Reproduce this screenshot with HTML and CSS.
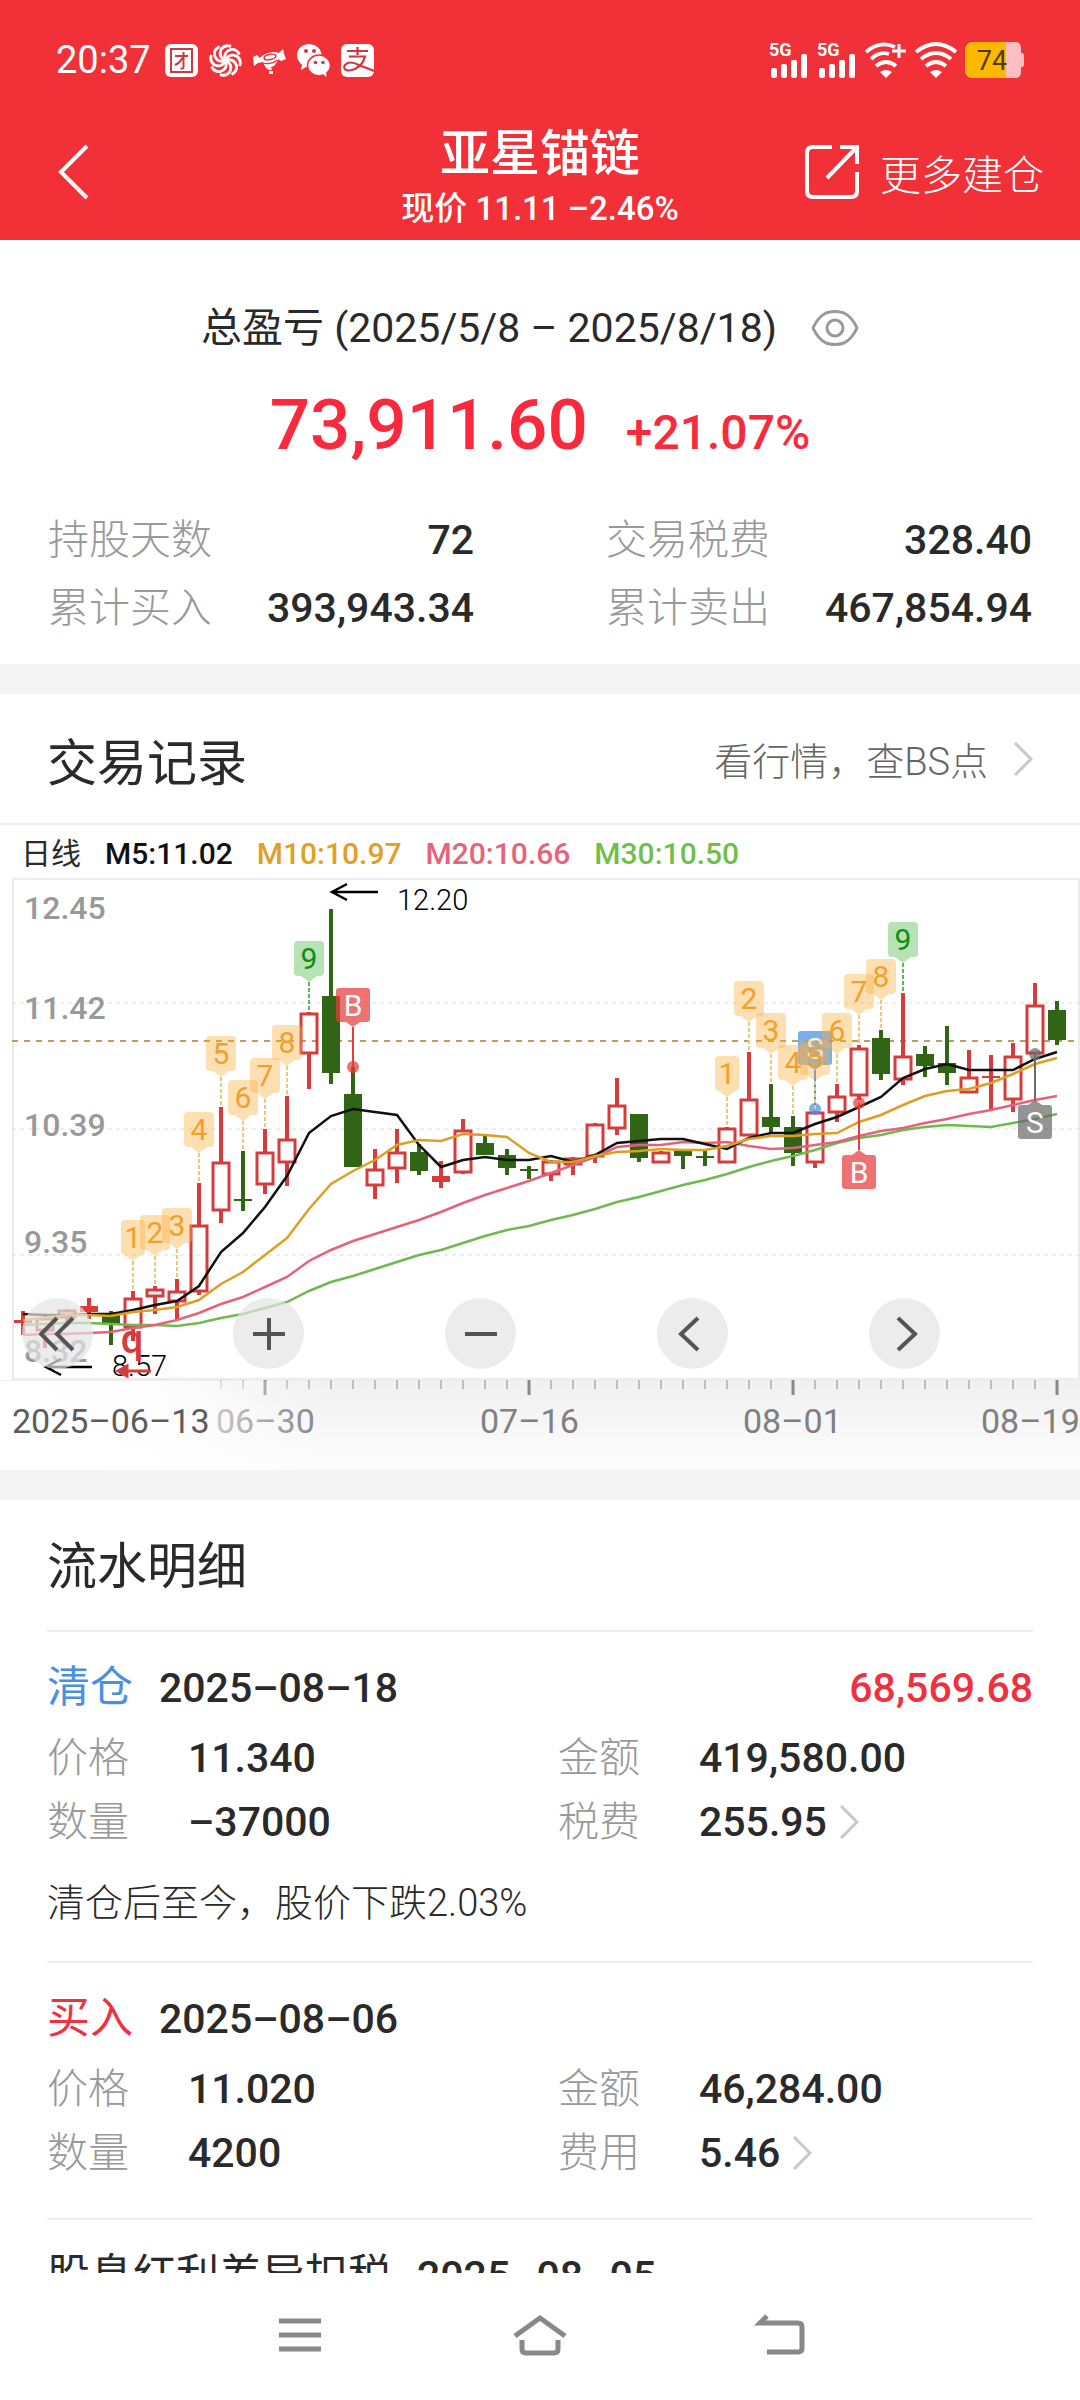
FILE: index.html
```html
<!DOCTYPE html>
<html lang="zh-CN">
<head>
    <meta charset="UTF-8">
    <meta name="viewport" content="width=device-width, initial-scale=1.0">
    <title>亚星锚链 - 总盈亏</title>
    <link rel="stylesheet" href="styles.css">
</head>
<body>
    <header class="header">
        <div class="status-bar">
            <span class="clock">20:37</span>
            <svg class="app-icon" viewBox="0 0 33 33"><rect width="33" height="33" rx="6" fill="#fff"/><rect x="6" y="5" width="21" height="23" fill="none" stroke="#c93a42" stroke-width="2"/><path d="M10 12h13M18.500 8v15q0 2-3 1.500M18 13q-3 6-8 8" fill="none" stroke="#c93a42" stroke-width="2"/></svg>
            <svg class="app-icon" viewBox="0 0 33 33" fill="none" stroke="#fff" stroke-width="2.800"><path id="arm" d="M16.500 16.500q-3-8 5-11 6-1 9 5"/><use href="#arm" transform="rotate(45 16.500 16.500)"/><use href="#arm" transform="rotate(90 16.500 16.500)"/><use href="#arm" transform="rotate(135 16.500 16.500)"/><use href="#arm" transform="rotate(180 16.500 16.500)"/><use href="#arm" transform="rotate(225 16.500 16.500)"/><use href="#arm" transform="rotate(270 16.500 16.500)"/><use href="#arm" transform="rotate(315 16.500 16.500)"/></svg>
            <svg class="app-icon" viewBox="0 0 33 33" fill="#fff"><path d="M0 13l4-2 3 3q4-5 13-6 4 0 6 1l4-4 1 5 2 5-5 2-3-2q-2 7-7 8l1 3h-3q-4-2-6-8l-5 1-4 3z"/><ellipse cx="17" cy="13" rx="6" ry="2.500" fill="none" stroke="#f13038" stroke-width="1.500" transform="rotate(-12 17 13)"/><path d="M9 19q10 2 15-3" fill="none" stroke="#f13038" stroke-width="1.200"/><rect x="16" y="27" width="4" height="3"/></svg>
            <svg class="app-icon" viewBox="0 0 33 33"><path d="M12.500 0C5 0 0 5 0 11q0 6 5 9.500L4 26l5-3q11 2 15-6 3-15-11.500-17z" fill="#fff"/><ellipse cx="22" cy="21.500" rx="11.500" ry="10.500" fill="#fff" stroke="#f13038" stroke-width="1.500"/><path d="M26 30l3.500 3-.5-5z" fill="#fff"/><g fill="#c93a42"><circle cx="9" cy="7" r="2"/><circle cx="17" cy="7" r="2"/><circle cx="18.500" cy="18.500" r="1.800"/><circle cx="26" cy="18.500" r="1.800"/></g></svg>
            <svg class="app-icon" viewBox="0 0 33 33"><rect width="33" height="33" rx="6" fill="#fff"/><path d="M16.500 3v8M6 7h21M8 12.500h16q-2 8-9 12-6 3-10 1.500-3-2-1-5 4-5 14 0l15 6" fill="none" stroke="#d4343c" stroke-width="2.200"/></svg>
            <div class="status-right">
                <svg class="signal" viewBox="0 0 40 36" fill="#fff"><text class="net" x="0" y="14">5G</text><rect x="2" y="26" width="6" height="10" rx="2"/><rect x="12" y="22" width="6" height="14" rx="2"/><rect x="22" y="18" width="6" height="18" rx="2"/><rect x="32" y="12" width="6" height="24" rx="2"/></svg>
                <svg class="signal" viewBox="0 0 40 36" fill="#fff"><text class="net" x="0" y="14">5G</text><rect x="2" y="26" width="6" height="10" rx="2"/><rect x="12" y="22" width="6" height="14" rx="2"/><rect x="22" y="18" width="6" height="18" rx="2"/><rect x="32" y="12" width="6" height="24" rx="2"/></svg>
                <svg class="wifi" viewBox="0 0 42 36" fill="none" stroke="#fff" stroke-width="3.800"><path d="M1 10Q15-2 30 5M6 17q9-8 18-5M11 24q10-8 20 0"/><path d="M34 2v14M27 9h14" stroke-width="3"/><path d="M15 30q6-4 12 0l-6 6z" fill="#fff" stroke="none"/></svg>
                <svg class="wifi" viewBox="0 0 42 36" fill="none" stroke="#fff" stroke-width="3.800"><path d="M1 10q20-16 40 0M6 17q15-12 30 0M11 24q10-8 20 0"/><path d="M15 30q6-4 12 0l-6 6z" fill="#fff" stroke="none"/></svg>
                <svg class="battery" viewBox="0 0 60 36"><path d="M9 0h41q6 0 6 6v5h1q2 0 2 3v8q0 3-2 3h-1v5q0 6-6 6H9q-9 0-9-9V9q0-9 9-9z" fill="#fcc0c3"/><path d="M9 0h32v36H9q-9 0-9-9V9q0-9 9-9z" fill="#ffb800"/><text class="level" x="27" y="28">74</text></svg>
            </div>
        </div>
        <div class="title-bar">
            <button class="icon-btn back" aria-label="返回"><svg width="31" height="56" viewBox="0 0 31 56" fill="none" stroke="#fff" stroke-width="4"><path d="M29 2L3 28l26 26"/></svg></button>
            <div class="title">
                <h1>亚星锚链</h1>
                <p>现价 11.11 –2.46%</p>
            </div>
            <a class="more" href="#"><svg width="56" height="56" viewBox="0 0 56 56" fill="none" stroke="#fff" stroke-width="4"><path d="M28 3H9q-6 0-6 6v38q0 6 6 6h38q6 0 6-6V28"/><path d="M36 3h17v17M53 3L23 34"/></svg>更多建仓</a>
        </div>
    </header>

    <main class="content">
        <section class="summary">
            <div class="period">
                <span>总盈亏 (2025/5/8 – 2025/8/18)</span>
                <button class="icon-btn" aria-label="隐藏金额"><svg width="48" height="36" viewBox="0 0 48 36" fill="none" stroke="#999" stroke-width="3"><path d="M2 18Q7 7 15 3q9-3 18 0 8 4 13 15-5 11-13 15-9 3-18 0Q7 29 2 18z"/><circle cx="24" cy="18" r="8"/></svg></button>
            </div>
            <div class="profit"><strong>73,911.60</strong><span>+21.07%</span></div>
            <dl class="stats">
                <div><dt>持股天数</dt><dd>72</dd></div>
                <div><dt>交易税费</dt><dd>328.40</dd></div>
                <div><dt>累计买入</dt><dd>393,943.34</dd></div>
                <div><dt>累计卖出</dt><dd>467,854.94</dd></div>
            </dl>
        </section>

        <section class="trades">
            <div class="section-head">
                <h2>交易记录</h2>
                <a class="quote-link" href="#">看行情，查BS点<svg class="chevron" viewBox="0 0 20 34"><path d="M2 1l16 16L2 33"/></svg></a>
            </div>
            <div class="legend">
                <span>日线</span>
                <span class="m5">M5:11.02</span>
                <span class="m10">M10:10.97</span>
                <span class="m20">M20:10.66</span>
                <span class="m30">M30:10.50</span>
            </div>
            <div class="chart">
                <svg id="kline" viewBox="0 0 1080 592"></svg>
                <div class="chart-tools">
                    <button aria-label="最早"><svg viewBox="0 0 36 36"><path d="M18 2L2 18l16 16M34 2L18 18l16 16"/></svg></button>
                    <button aria-label="放大"><svg viewBox="0 0 36 36"><path d="M18 2v32M2 18h32"/></svg></button>
                    <button aria-label="缩小"><svg viewBox="0 0 36 36"><path d="M2 18h32"/></svg></button>
                    <button aria-label="向前"><svg viewBox="0 0 36 36"><path d="M24 2L7 18l17 16"/></svg></button>
                    <button aria-label="向后"><svg viewBox="0 0 36 36"><path d="M12 2l17 16-17 16"/></svg></button>
                </div>
            </div>
        </section>

        <section class="details">
            <h2>流水明细</h2>
            <article class="entry">
                <div class="entry-head"><span class="type sell">清仓</span><time>2025–08–18</time><span class="amount">68,569.68</span></div>
                <dl class="fields">
                    <dt>价格</dt><dd>11.340</dd><dt>金额</dt><dd>419,580.00</dd>
                    <dt>数量</dt><dd>–37000</dd><dt>税费</dt><dd>255.95<svg class="chevron" viewBox="0 0 20 34"><path d="M2 1l16 16L2 33"/></svg></dd>
                </dl>
                <p class="note">清仓后至今，股价下跌2.03%</p>
            </article>
            <article class="entry">
                <div class="entry-head"><span class="type buy">买入</span><time>2025–08–06</time></div>
                <dl class="fields">
                    <dt>价格</dt><dd>11.020</dd><dt>金额</dt><dd>46,284.00</dd>
                    <dt>数量</dt><dd>4200</dd><dt>费用</dt><dd>5.46<svg class="chevron" viewBox="0 0 20 34"><path d="M2 1l16 16L2 33"/></svg></dd>
                </dl>
            </article>
            <article class="entry">
                <div class="entry-head"><span class="type">股息红利差异扣税</span><time>2025–08–05</time></div>
            </article>
        </section>
    </main>

    <nav class="system-nav">
        <button class="icon-btn" aria-label="最近任务"><svg width="56" height="44" viewBox="0 0 56 44"><path d="M7 8h42M7 22h42M7 36h42"/></svg></button>
        <button class="icon-btn" aria-label="主屏幕"><svg width="56" height="44" viewBox="0 0 56 44"><path d="M3 23L28 5l25 18M10 27v9q0 4 4 4h28q4 0 4-4v-9"/></svg></button>
        <button class="icon-btn" aria-label="返回上级"><svg width="56" height="44" viewBox="0 0 56 44"><path d="M15 3L8 10h38q4 0 4 4v21q0 4-4 4H15"/></svg></button>
    </nav>
    <script src="chart.js"></script>
</body>
</html>
```
FILE: styles.css
```css
* {
    margin: 0;
    padding: 0;
    box-sizing: border-box;
}

body {
    display: flex;
    flex-direction: column;
    height: 100vh;
    overflow: hidden;
    background: #fff;
    color: #2a2a2a;
    font-family: Roboto, "Noto Sans CJK SC", sans-serif;
    font-size: 41px;
}

button {
    border: none;
    background: none;
    font: inherit;
    cursor: pointer;
}

a {
    color: inherit;
    text-decoration: none;
}

svg {
    display: block;
    flex: none;
}

h1,
h2 {
    font-weight: 500;
    font-size: 50px;
}

h2 {
    font-weight: 400;
}

.icon-btn {
    display: flex;
}

/* header */
.header {
    flex: none;
    background: #f13038;
    color: #fff;
}

.status-bar {
    display: flex;
    align-items: center;
    gap: 11px;
    height: 104px;
    padding: 40px 55px 24px 56px;
}

.clock {
    font-size: 38px;
    margin-right: 3px;
}

.app-icon {
    width: 33px;
    height: 33px;
}

.status-right {
    display: flex;
    align-items: center;
    gap: 8px;
    margin-left: auto;
}

.signal {
    width: 40px;
    height: 36px;
    overflow: visible;
}

.net {
    font-size: 18px;
    font-weight: 700;
}

.wifi {
    width: 42px;
    height: 36px;
}

.battery {
    width: 60px;
    height: 36px;
}

.level {
    font-size: 27px;
    fill: #4d3a00;
    text-anchor: middle;
}

.title-bar {
    display: grid;
    grid-template-columns: 1fr auto 1fr;
    align-items: center;
    height: 136px;
    padding: 0 36px;
}

.back {
    padding-left: 22px;
}

.title {
    padding-top: 14px;
    text-align: center;
}

.title h1 {
    line-height: 60px;
}

.title p {
    font-size: 33px;
    font-weight: 500;
    line-height: 50px;
}

.more {
    display: flex;
    align-items: center;
    justify-content: flex-end;
    gap: 20px;
    font-weight: 300;
}

.content {
    flex: 1;
    min-height: 0;
    overflow: hidden;
}

/* total profit */
.summary {
    padding: 52px 48px 22px;
    border-bottom: 30px solid #f4f4f4;
}

.period {
    display: flex;
    align-items: center;
    justify-content: center;
    gap: 34px;
    padding-right: 20px;
    line-height: 72px;
}

.profit {
    display: flex;
    align-items: baseline;
    justify-content: center;
    gap: 38px;
    line-height: 122px;
    color: #fa2a3c;
}

.profit strong {
    font-size: 71px;
    font-weight: 500;
}

.profit span {
    font-size: 48px;
    font-weight: 500;
    line-height: 60px;
}

.stats {
    display: grid;
    grid-template-columns: 1fr 1fr;
    column-gap: 132px;
    padding-top: 20px;
    line-height: 68px;
}

.stats div {
    display: flex;
    justify-content: space-between;
}

dt {
    color: #999;
    font-weight: 300;
}

dd {
    font-weight: 500;
}

/* trade records */
.trades {
    border-bottom: 30px solid #f4f4f4;
}

.section-head {
    display: flex;
    align-items: center;
    justify-content: space-between;
    height: 131px;
    padding: 0 47px;
    border-bottom: 2px solid #eee;
}

.quote-link {
    display: flex;
    align-items: center;
    gap: 25px;
    color: #666;
    font-size: 38px;
    font-weight: 300;
}

.chevron {
    width: 20px;
    height: 34px;
    fill: none;
    stroke: #c8c8c8;
    stroke-width: 3;
}

.legend {
    display: flex;
    gap: 24px;
    padding: 4px 21px 0;
    font-size: 30px;
    line-height: 49px;
}

.legend span + span {
    font-weight: 500;
}

.m5 {
    color: #111;
}

.m10 {
    color: #dfa024;
}

.m20 {
    color: #e8637a;
}

.m30 {
    color: #6fbf4b;
}

.chart {
    position: relative;
}

#kline {
    width: 100%;
}

.chart-tools {
    position: absolute;
    top: 71%;
    left: 2%;
    right: 13%;
    display: flex;
    justify-content: space-between;
}

.chart-tools button {
    display: flex;
    align-items: center;
    justify-content: center;
    width: 71px;
    height: 71px;
    border-radius: 50%;
    background: rgba(228, 228, 228, 0.7);
}

.chart-tools svg {
    width: 36px;
    height: 36px;
    fill: none;
    stroke: #555;
    stroke-width: 4;
}

.scale {
    fill: #999;
    font-size: 32px;
    font-weight: 500;
}

.date {
    fill: #808080;
    font-size: 34px;
}

.date.first {
    fill: #5c5c5c;
}

.extreme {
    fill: #000;
    font-size: 29px;
    font-weight: 300;
}

.mark {
    font-size: 30px;
    text-anchor: middle;
}

/* detail list */
.details {
    padding: 0 47px;
}

.details h2 {
    padding-top: 4px;
    line-height: 126px;
}

.entry {
    padding: 23px 0 33px;
    border-top: 2px solid #eee;
}

.entry-head {
    display: flex;
    align-items: baseline;
    gap: 26px;
    margin-bottom: 6px;
    line-height: 64px;
}

.entry-head time,
.amount {
    font-weight: 500;
}

.type {
    font-size: 43px;
}

.sell {
    color: #4a90e2;
}

.buy {
    color: #f03040;
}

.amount {
    margin-left: auto;
    color: #f03040;
}

.fields {
    display: grid;
    grid-template-columns: 141px 370px 141px 1fr;
    line-height: 64px;
}

.fields dd {
    display: flex;
    align-items: center;
    gap: 12px;
}

.note {
    margin-top: 24px;
    font-size: 38px;
    font-weight: 300;
    line-height: 50px;
}

/* system navigation */
.system-nav {
    flex: none;
    display: flex;
    justify-content: center;
    gap: 184px;
    height: 127px;
    padding-top: 40px;
}

.system-nav path {
    fill: none;
    stroke: #888;
    stroke-width: 5;
}
```
FILE: chart.js
```javascript
const UP = '#d63c3c';
const DOWN = '#2f6514';
const STEP = 22;
const x = i => 23 + i * STEP;

// [direction, high, body top, body bottom, low], "f" is a filled rising bar
const candles = [
    ['f', 433, 442, 445, 457], ['u', 436, 440, 453, 470], ['u', 431, 432, 440, 449], ['f', 420, 428, 434, 441],
    ['d', 433, 437, 446, 467], ['u', 413, 420, 450, 463], ['u', 408, 411, 419, 436], ['u', 401, 413, 424, 441],
    ['u', 305, 347, 414, 417], ['u', 229, 284, 333, 345], ['d', 273, 321, 323, 333], ['u', 251, 274, 307, 316],
    ['u', 218, 261, 285, 308], ['u', 134, 135, 176, 211], ['d', 31, 118, 195, 206], ['d', 189, 216, 289, 289],
    ['u', 271, 291, 308, 321], ['u', 251, 274, 291, 305], ['d', 266, 274, 293, 297], ['f', 283, 298, 304, 310],
    ['u', 241, 252, 295, 296], ['d', 258, 265, 277, 277], ['d', 271, 277, 290, 297], ['d', 288, 291, 293, 301],
    ['u', 282, 283, 297, 303], ['u', 279, 280, 287, 297], ['u', 245, 246, 279, 285], ['u', 200, 227, 251, 257],
    ['d', 236, 236, 280, 284], ['u', 273, 274, 285, 285], ['d', 273, 273, 278, 291], ['d', 273, 278, 280, 288],
    ['u', 249, 250, 285, 285], ['u', 174, 221, 258, 258], ['d', 206, 239, 249, 255], ['d', 238, 249, 275, 288],
    ['u', 233, 234, 285, 290], ['u', 206, 218, 235, 244], ['u', 167, 170, 218, 222], ['d', 152, 160, 196, 202],
    ['u', 115, 178, 202, 207], ['d', 168, 176, 188, 199], ['d', 148, 185, 195, 207], ['u', 172, 199, 215, 215],
    ['f', 177, 198, 200, 231], ['u', 165, 178, 222, 234], ['u', 105, 127, 176, 176], ['d', 123, 132, 162, 167]
];

const averages = {
    '#6fb94e': [447, 446, 445, 445, 446, 447, 447, 448, 445, 440, 436, 430, 424, 413, 404, 398, 391, 384, 377, 372, 365, 358, 352, 348, 342, 337, 331, 324, 319, 313, 307, 302, 296, 289, 283, 278, 272, 265, 260, 257, 252, 249, 247, 248, 249, 245, 241, 236],
    '#e5627a': [457, 456, 456, 455, 454, 450, 447, 442, 435, 426, 419, 409, 399, 383, 372, 363, 356, 349, 342, 334, 325, 317, 310, 303, 295, 287, 279, 269, 267, 267, 264, 265, 264, 268, 271, 270, 267, 264, 258, 253, 250, 245, 241, 236, 232, 227, 222, 218],
    '#111': [436, 437, 437, 436, 436, 432, 427, 423, 408, 374, 355, 329, 298, 255, 238, 231, 234, 237, 267, 289, 282, 279, 282, 282, 278, 284, 277, 265, 263, 261, 261, 266, 271, 260, 255, 255, 246, 239, 229, 219, 200, 191, 186, 192, 192, 192, 181, 174],
    '#dd9f22': [442, 440, 437, 437, 438, 434, 432, 429, 422, 406, 394, 377, 360, 331, 306, 293, 282, 267, 262, 263, 256, 257, 259, 275, 284, 284, 278, 274, 273, 271, 272, 272, 268, 261, 258, 258, 256, 255, 244, 237, 227, 218, 213, 211, 205, 196, 186, 180]
};

// nine-count labels: candle index -> number
const counts = [[5, 1], [6, 2], [7, 3], [8, 4], [9, 5], [10, 6], [11, 7], [12, 8], [13, 9],
    [32, 1], [33, 2], [34, 3], [35, 4], [36, 5], [37, 6], [38, 7], [39, 8], [40, 9]];

// [index, letter, box top, dot y, colour]
const orders = [[15, 'B', 110, 189, '#e83c3c'], [36, 'S', 153, 231, '#4a90e2'],
    [38, 'B', 277, 225, '#e83c3c'], [46, 'S', 227, 176, '#6b6b6b']];

const line = (x1, y1, x2, y2, color, width, dash) =>
    `<line x1="${x1}" y1="${y1}" x2="${x2}" y2="${y2}" stroke="${color}" stroke-width="${width}" stroke-dasharray="${dash || 'none'}"/>`;

const text = (cls, tx, ty, value) => `<text class="${cls}" x="${tx}" y="${ty}">${value}</text>`;

let out = `<defs>
    <linearGradient id="shade" x2="0" y2="1"><stop stop-color="#f0f0f0"/><stop offset="1" stop-color="#fdfdfd"/></linearGradient>
    <linearGradient id="fade"><stop stop-color="#fff"/><stop offset="0.45" stop-color="#fff" stop-opacity="0.9"/><stop offset="1" stop-color="#fff" stop-opacity="0"/></linearGradient>
</defs>`;

// frame and grid
out += '<rect x="13" y="1" width="1066" height="500" fill="none" stroke="#ececec" stroke-width="2"/>';
out += '<rect y="502" width="1080" height="90" fill="url(#shade)"/>';
[125, 251, 377].forEach(y => out += line(12, y, 1080, y, '#ddd', 1, '4 4'));
out += line(12, 163, 1080, 163, '#c29b5c', 2, '6 6');
[['12.45', 41], ['11.42', 141], ['10.39', 258], ['9.35', 375], ['8.32', 484]]
    .forEach(([v, y]) => out += text('scale', 24, y, v));

// date axis
for (let i = 9; i < 48; i++) {
    const major = i % 12 === 11;
    out += line(x(i), 502, x(i), major ? 517 : 511, '#888', major ? 3 : 1);
}
[['06–30', 216], ['07–16', 480], ['08–01', 743], ['08–19', 981]]
    .forEach(([v, dx]) => out += text('date', dx, 555, v));
out += '<rect y="503" width="330" height="89" fill="url(#fade)"/>';
out += text('date first', 12, 555, '2025–06–13');

candles.forEach(([dir, high, top, bottom, low], i) => {
    const color = dir === 'd' ? DOWN : UP;
    if (dir === 'u') {
        out += line(x(i), high, x(i), top, color, 4);
        out += line(x(i), bottom, x(i), low, color, 4);
        out += `<rect x="${x(i) - 8}" y="${top + 1}" width="16" height="${bottom - top - 2}" fill="none" stroke="${color}" stroke-width="3"/>`;
    } else {
        out += line(x(i), high, x(i), low, color, 4);
        out += `<rect x="${x(i) - 9}" y="${top}" width="18" height="${bottom - top}" fill="${color}"/>`;
    }
});

for (const color in averages) {
    const points = averages[color].map((y, i) => `${x(i)},${y}`).join(' ');
    out += `<polyline points="${points}" fill="none" stroke="${color}" stroke-width="2.500"/>`;
}

orders.forEach(([i, letter, top, dot, color]) => {
    const below = top > dot;
    const cx = x(i);
    const tip = below ? `M${cx - 7} ${top}l7-5 7 5z` : `M${cx - 7} ${top + 34}l7 5 7-5z`;
    out += line(cx, below ? top - 5 : top + 39, cx, dot, color, 2);
    out += `<g fill="${color}" opacity="0.72"><circle cx="${cx}" cy="${dot}" r="6"/><rect x="${cx - 17}" y="${top}" width="34" height="34" rx="3"/><path d="${tip}"/></g>`;
    out += `<text class="mark" x="${cx}" y="${top + 28}" fill="#fff">${letter}</text>`;
});

counts.forEach(([i, n]) => {
    const high = candles[i][1];
    const top = high - 71;
    const half = n === 1 ? 12 : 15;
    const box = n === 9 ? '#4ab84a' : '#fbb040';
    const ink = n === 9 ? '#0d8f0d' : '#f0a02c';
    out += line(x(i), top + 41, x(i), high, n === 9 ? '#5db55d' : '#ecc77e', 2, '4 2');
    out += `<g fill="${box}" opacity="0.4"><rect x="${x(i) - half}" y="${top}" width="${half * 2}" height="35" rx="4"/><path d="M${x(i) - 8} ${top + 35}l8 6 8-6z"/></g>`;
    out += `<text class="mark" x="${x(i)}" y="${top + 28}" fill="${ink}">${n}</text>`;
});

// highest and lowest prices
out += '<path d="M378 14h-46m15-8l-15 8 15 8M92 489H46m15-8l-15 8 15 8" fill="none" stroke="#000" stroke-width="2.500"/>';
out += text('extreme', 397, 32, '12.20') + text('extreme', 112, 498, '8.57');
out += `<text class="mark" x="132" y="475" font-weight="500" fill="${UP}"><tspan font-size="40">q</tspan></text>`;
out += `<path d="M151 493h-33m9-5l-9 5 9 5z" fill="${UP}" stroke="${UP}" stroke-width="3"/>`;

document.getElementById('kline').innerHTML = out;
```
